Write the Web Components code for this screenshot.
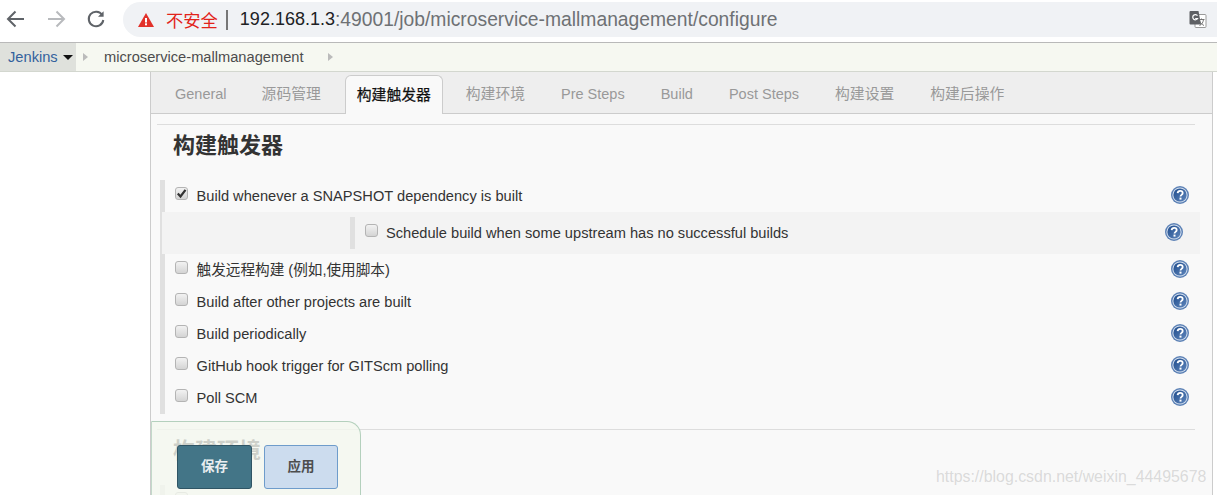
<!DOCTYPE html>
<html>
<head>
<meta charset="utf-8">
<style>
html,body{margin:0;padding:0;height:495px;overflow:hidden;background:#fff;}
body{font-family:"Liberation Sans","Noto Sans CJK SC",sans-serif;}
config-section.next{margin-top:15px;}
</style>
</head>
<body>
<browser-bar></browser-bar>
<crumb-bar></crumb-bar>
<config-page>
	<config-tabs></config-tabs>
	<config-section title="构建触发器">
		<config-row checked>Build whenever a SNAPSHOT dependency is built</config-row>
		<config-row nested>Schedule build when some upstream has no successful builds</config-row>
		<config-row>触发远程构建 (例如,使用脚本)</config-row>
		<config-row>Build after other projects are built</config-row>
		<config-row>Build periodically</config-row>
		<config-row>GitHub hook trigger for GITScm polling</config-row>
		<config-row>Poll SCM</config-row>
	</config-section>
	<config-section title="构建环境" class="next">
		<config-row bare></config-row>
	</config-section>
</config-page>
<save-bar></save-bar>
<water-mark>https://blog.csdn.net/weixin_44495678</water-mark>

<script>
class BrowserBar extends HTMLElement {
	constructor() {
		super();
		this.attachShadow({mode:"open"}).innerHTML = `
		<style>
		:host{display:flex;align-items:flex-start;height:42px;box-sizing:content-box;border-bottom:1px solid #b9b9b9;background:#fff;}
		.nav{display:flex;width:123px;height:38px;align-items:center;flex:none;}
		.nav svg{display:block;flex:none;}
		.pill{flex:1;height:35px;margin-top:2px;background:#f0f2f5;border-radius:18px 0 0 18px;display:flex;align-items:center;font-size:18px;white-space:nowrap;}
		.warn{margin-left:15px;flex:none;}
		.bad{color:#e2231a;font-size:17.3px;margin-left:12px;}
		.sep{width:2px;height:20px;background:#777;margin:0 12px 0 8px;}
		.host{color:#202124;}
		.rest{color:#6e7174;font-size:19.3px;}
		.tr{margin-left:auto;margin-right:10px;flex:none;}
		</style>
		<div class="nav">
			<svg style="margin-left:6px" width="20" height="20" viewBox="0 0 20 20" fill="none" stroke="#5f6368" stroke-width="2"><path d="M18 10H2.5M9.5 2.5 2 10l7.5 7.5"/></svg>
			<svg style="margin-left:20px" width="20" height="20" viewBox="0 0 20 20" fill="none" stroke="#b8babd" stroke-width="2"><path d="M2 10h15.5M10.5 2.5 18 10l-7.5 7.5"/></svg>
			<svg style="margin-left:20px" width="20" height="20" viewBox="0 0 20 20" fill="none" stroke="#5f6368" stroke-width="2"><path d="M16.2 6A7.3 7.3 0 1 0 17.3 11"/><path d="M17.6 2.2v5.6H12z" fill="#5f6368" stroke="none"/></svg>
		</div>
		<div class="pill">
			<svg class="warn" width="16" height="14" viewBox="0 0 16 14"><path d="M8 0 16 14H0z" fill="#e2312a"/><rect x="7" y="5" width="2" height="4.5" fill="#fff"/><rect x="7" y="10.3" width="2" height="2" fill="#fff"/></svg>
			<span class="bad">不安全</span><span class="sep"></span>
			<span class="host">192.168.1.3</span><span class="rest">:49001/job/microservice-mallmanagement/configure</span>
			<svg class="tr" width="18" height="19" viewBox="0 0 18 18"><rect x="6" y="4" width="11" height="13" rx="1" fill="#fff" stroke="#9a9a9a"/><path d="M1.5 0.5H9.5L12 14H1.5a1 1 0 0 1-1-1V1.5a1 1 0 0 1 1-1z" fill="#5e6064"/><path d="M8.500 5.200A2.600 2.600 0 1 0 8.600 8H6.200" fill="none" stroke="#fff" stroke-width="1.200"/><path d="M9.500 9h6M12.500 8v1M10.500 15c2.500-1 3.500-3 4-6M10.500 10.500c1 2 2.500 3.500 4.500 4.500" fill="none" stroke="#666" stroke-width="0.900"/></svg>
		</div>`;
	}
}
customElements.define("browser-bar", BrowserBar);

class CrumbBar extends HTMLElement {
	constructor() {
		super();
		this.attachShadow({mode:"open"}).innerHTML = `
		<style>
		:host{display:flex;height:28px;border-bottom:1px solid #d3d7cf;background:#f6f8f1;font-size:14.67px;align-items:stretch;line-height:28px;}
		.root{width:76px;box-sizing:border-box;background:#dfe1dc;padding-left:8px;color:#33619c;display:flex;align-items:center;flex:none;}
		.caret{width:0;height:0;border:5px solid transparent;border-top-color:#111;border-bottom:0;margin-left:5px;margin-top:1px;}
		.arrow{width:0;height:0;border:4px solid transparent;border-left:5px solid #bbb;border-right:0;align-self:center;flex:none;}
		.page{color:#4d4d4d;margin:0 24px 0 16px;}
		</style>
		<div class="root">Jenkins<span class="caret"></span></div>
		<span class="arrow" style="margin-left:7px"></span>
		<span class="page">microservice-mallmanagement</span>
		<span class="arrow"></span>`;
	}
}
customElements.define("crumb-bar", CrumbBar);

class ConfigPage extends HTMLElement {
	constructor() {
		super();
		this.attachShadow({mode:"open"}).innerHTML = `
		<style>
		:host{display:block;margin-left:150px;margin-right:4px;height:423px;box-sizing:border-box;border-left:1px solid #ccc;border-right:1px solid #ccc;background:#f9f9f9;overflow:hidden;}
		</style>
		<slot></slot>`;
	}
}
customElements.define("config-page", ConfigPage);

class ConfigTabs extends HTMLElement {
	constructor() {
		super();
		const tabs = [["General",24,0,0],["源码管理",35,1,0],["构建触发器",24,1,1],["构建环境",23,1,0],["Pre Steps",36,0,0],["Build",36,0,0],["Post Steps",36,0,0],["构建设置",36,1,0],["构建后操作",36,1,0]];
		const html = tabs.map(t => `<span class="tab${t[2]?" cjk":""}${t[3]?" on":""}" style="margin-left:${t[1]}px">${t[0]}</span>`).join("");
		this.attachShadow({mode:"open"}).innerHTML = `
		<style>
		:host{display:flex;height:41px;box-sizing:content-box;background:#eee;border-bottom:1px solid #ccc;align-items:flex-end;font-size:14.5px;color:#999;white-space:nowrap;}
		.tab{height:38px;line-height:38px;flex:none;}
		.cjk{font-size:14.8px;}
		.on{color:#111;background:#f9f9f9;border:1px solid #ccc;border-bottom:0;border-radius:6px 6px 0 0;padding:0 11px;margin-bottom:-1px;box-sizing:content-box;-webkit-text-stroke:.25px #111;}
		</style>
		${html}`;
	}
}
customElements.define("config-tabs", ConfigTabs);

class ConfigSection extends HTMLElement {
	constructor() {
		super();
		this.attachShadow({mode:"open"}).innerHTML = `
		<style>
		:host{display:block;margin:10px 17px 0 6px;}
		.line{border-top:1px solid #ddd;}
		h2{margin:0 0 0 16px;height:46px;line-height:42px;font-size:22px;font-weight:bold;color:#333;}
		.rows{margin:9px 0 0 3px;border-left:5px solid #e0e0e0;}
		</style>
		<div class="line"></div>
		<h2></h2>
		<div class="rows"><slot></slot></div>`;
		this.shadowRoot.querySelector("h2").textContent = this.getAttribute("title");
	}
}
customElements.define("config-section", ConfigSection);

class HelpIcon extends HTMLElement {
	constructor() {
		super();
		this.attachShadow({mode:"open"}).innerHTML = `
		<style>
		:host{display:block;width:18px;height:18px;flex:none;margin-top:-2px;}
		svg{display:block;}
		</style>
		<svg width="18" height="18" viewBox="0 0 18 18">
			<defs><linearGradient id="g" x1="0" y1="0" x2="1" y2="1"><stop offset="0" stop-color="#1f4c8c"/><stop offset="1" stop-color="#5f86bc"/></linearGradient></defs>
			<circle cx="9" cy="9" r="9" fill="#5d82b6"/>
			<circle cx="9" cy="9" r="7.6" fill="#d5e0ef"/>
			<circle cx="9" cy="9" r="6.600" fill="url(#g)"/>
			<path d="M6.600 7.200C6.800 5.400 8 4.800 9.200 4.800c1.500 0 2.500.9 2.500 2.100 0 2-2.200 1.900-2.200 3.600" fill="none" stroke="#fff" stroke-width="1.800"/>
			<rect x="8.500" y="11.600" width="2" height="2" fill="#fff"/>
		</svg>`;
	}
}
customElements.define("help-icon", HelpIcon);

class ConfigRow extends HTMLElement {
	constructor() {
		super();
		const nested = this.hasAttribute("nested");
		const checked = this.hasAttribute("checked");
		const bare = this.hasAttribute("bare");
		const tick = checked ? `<svg width="11" height="11" viewBox="0 0 11 11"><path d="M1.800 5.500 4.500 8.500 9.500 1.800" fill="none" stroke="#333" stroke-width="2.200"/></svg>` : "";
		this.attachShadow({mode:"open"}).innerHTML = `
		<style>
		:host{display:block;font-size:14.63px;color:#333;}
		.row{display:flex;align-items:center;height:32px;padding:0 6px 0 10px;}
		.box{width:13px;height:13px;box-sizing:border-box;flex:none;border:1px solid #b4b4b4;border-radius:3px;background:linear-gradient(#f2f2f2,#d4d4d4);margin-top:-6px;display:block;}
		.text{margin-left:8.5px;flex:1;white-space:nowrap;line-height:16px;}
		.wrap{background:#f3f3f3;height:42px;margin-left:-3px;margin-right:-5px;display:flex;align-items:center;padding-left:188px;}
		.in{flex:1;display:flex;align-items:center;height:32px;border-left:5px solid #e0e0e0;padding:0 17px 0 10px;}
		.in .text{margin-left:8px;}
		svg{display:block;}
		</style>
		${nested
			? `<div class="wrap"><div class="in"><span class="box"></span><span class="text"><slot></slot></span><help-icon></help-icon></div></div>`
			: `<div class="row"><span class="box">${tick}</span>${bare ? "" : `<span class="text"><slot></slot></span><help-icon></help-icon>`}</div>`}`;
	}
}
customElements.define("config-row", ConfigRow);

class SaveBar extends HTMLElement {
	constructor() {
		super();
		this.attachShadow({mode:"open"}).innerHTML = `
		<style>
		:host{position:absolute;left:151px;top:421px;width:210px;height:74px;box-sizing:border-box;border:1px solid #b4d0bd;border-bottom:0;border-left-color:#c3d9ca;border-radius:0 14px 0 0;background:rgba(244,248,239,.8);display:flex;gap:12px;padding:23px 0 0 25px;align-items:flex-start;font-size:13.5px;font-weight:bold;}
		button{font:inherit;height:44px;padding:0 0 4px;border-radius:3px;box-sizing:border-box;cursor:pointer;}
		.save{width:75px;background:#437587;border:1px solid #2f5565;color:#e9eef0;}
		.apply{width:74px;background:#ccdcee;border:1px solid #6e9ccb;color:#4d4d4d;}
		</style>
		<button class="save">保存</button>
		<button class="apply">应用</button>`;
	}
}
customElements.define("save-bar", SaveBar);

class WaterMark extends HTMLElement {
	constructor() {
		super();
		this.attachShadow({mode:"open"}).innerHTML = `
		<style>
		:host{position:absolute;left:936px;top:468px;font-size:15.9px;color:rgba(170,170,170,.4);white-space:nowrap;pointer-events:none;}
		</style>
		<slot></slot>`;
	}
}
customElements.define("water-mark", WaterMark);
</script>
</body>
</html>
